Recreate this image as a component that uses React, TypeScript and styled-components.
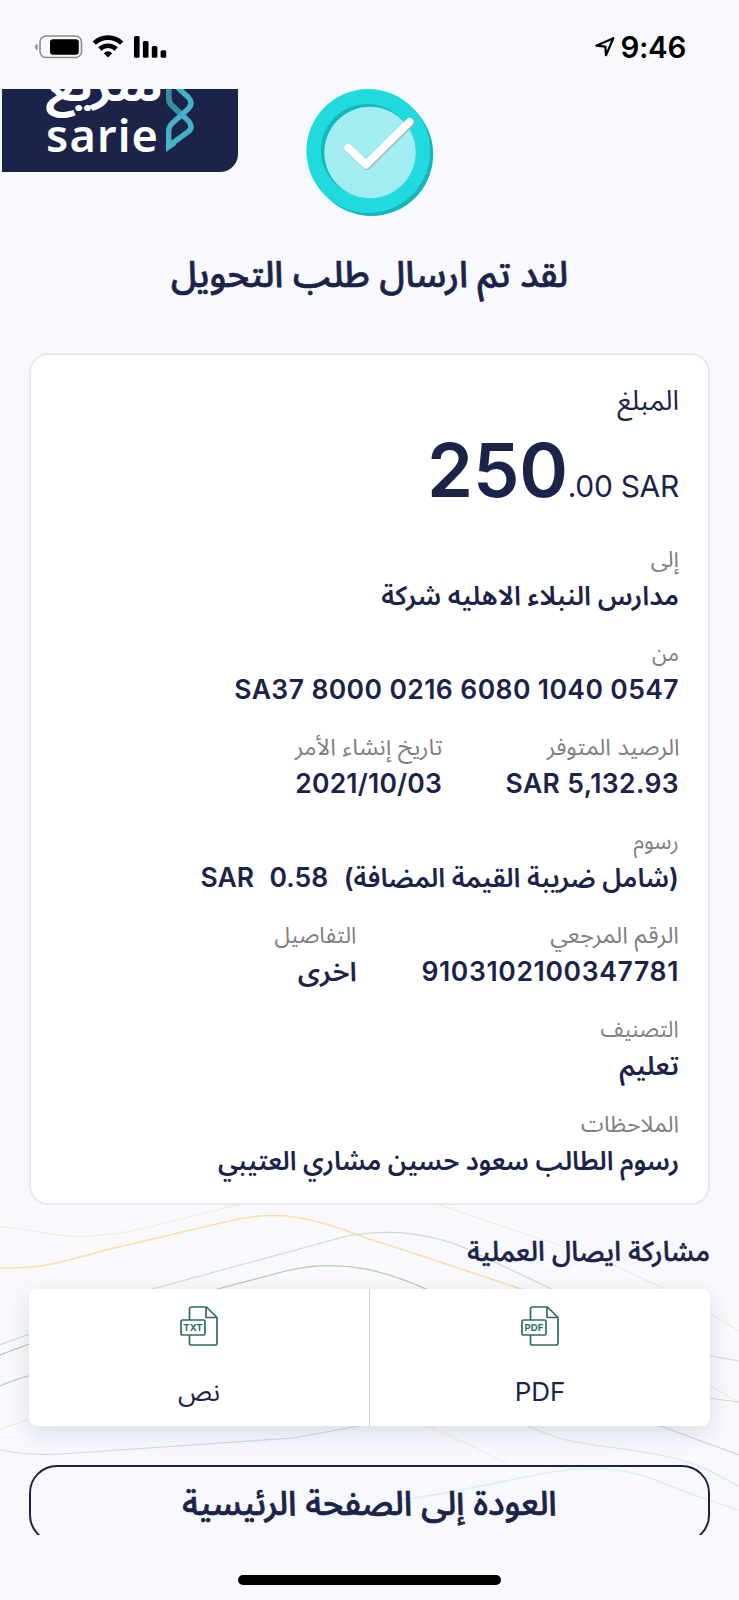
import React from 'react';
import styled, { createGlobalStyle } from 'styled-components';

const navy = '#1b2448';

const GlobalStyle = createGlobalStyle`
  * { box-sizing: border-box; }
  body {
    margin: 0;
    background: #f8f9ff;
    color: ${navy};
    font-family: Inter, "Noto Sans Arabic", "DejaVu Sans", sans-serif;
  }
`;

const Screen = styled.div`
  position: relative;
  width: 739px;
  height: 1600px;
  overflow: hidden;
  background: #f8f9ff;
  display: flex;
  flex-direction: column;
`;

const Waves = styled.svg`
  position: absolute;
  left: 0;
  top: 1200px;
  fill: none;
  stroke-width: 1.2;
`;

const StatusBar = styled.header`
  flex: none;
  display: flex;
  justify-content: space-between;
  align-items: center;
  height: 89px;
  padding: 5px 53px 0 34px;
`;

const StatusGroup = styled.div`
  display: flex;
  align-items: center;
  gap: 4px;
`;

const Clock = styled.span`
  font-size: 29.5px;
  font-weight: 600;
  line-height: 34px;
  letter-spacing: -0.3px;
  color: #000;
`;

const Viewport = styled.main`
  position: relative;
  flex: none;
  height: 1446px;
  overflow: hidden;
  display: flex;
  flex-direction: column;
  & > * { flex: none; }
`;

const Hero = styled.section`
  display: grid;
  grid-template-columns: 303.5px 128px 1fr;
  height: 134px;
  padding-left: 2px;
`;

const SarieBadge = styled.div`
  display: flex;
  gap: 4px;
  width: 236px;
  height: 83px;
  padding-left: 44px;
  overflow: hidden;
  border-bottom-right-radius: 18px;
  background: ${navy};
  color: #fff;
`;

const SarieWords = styled.div`
  display: flex;
  flex-direction: column;
  width: 114px;
`;

const SarieArabic = styled.span`
  height: 28px;
  margin-top: -18px;
  line-height: 28px;
  font-size: 43px;
  font-weight: 700;
  white-space: nowrap;
  transform: scaleX(1.18);
  transform-origin: left center;
`;

const SarieLatin = styled.span`
  margin-top: 11px;
  font: 600 45px/50px "Noto Sans", sans-serif;
  letter-spacing: 1.2px;
`;

const Title = styled.h1`
  margin: 21px 0 0;
  height: 60px;
  font-size: 36.3px;
  line-height: 60px;
  font-weight: 500;
  text-align: center;
  direction: rtl;
  -webkit-text-stroke: 0.7px ${navy};
`;

const Card = styled.section`
  direction: rtl;
  margin: 49px 29px 0;
  height: 852px;
  padding: 24.5px 29px 0;
  border: 2px solid #e8e8ee;
  border-radius: 19px;
  background: #fff;
`;

const AmountLabel = styled.div`
  height: 40px;
  line-height: 40px;
  font-size: 27.5px;
`;

const Amount = styled.div`
  direction: ltr;
  display: flex;
  justify-content: flex-end;
  align-items: baseline;
  height: 121px;
  line-height: 100px;
  font-size: 30px;
  letter-spacing: -0.3px;
`;

const Whole = styled.span`
  font-size: 74px;
  font-weight: 600;
`;

const FieldRow = styled.div<{ $gap: number }>`
  display: flex;
  gap: ${(p) => p.$gap}px;
  height: 94.2px;
`;

const Field = styled.div`
  display: flex;
  flex-direction: column;
  align-items: flex-start;
`;

const Label = styled.span<{ $stretch?: number }>`
  height: 35px;
  line-height: 36px;
  font-size: 23px;
  color: #7f7f83;
  white-space: nowrap;
  transform: scaleX(${(p) => p.$stretch ?? 1});
  transform-origin: right center;
`;

const Value = styled.span<{ $stretch?: number; $spacing?: number }>`
  display: flex;
  gap: 15.5px;
  height: 38px;
  line-height: 38px;
  font-size: 26.5px;
  font-weight: 600;
  letter-spacing: ${(p) => p.$spacing ?? 0}px;
  white-space: nowrap;
  transform: scaleX(${(p) => p.$stretch ?? 1});
  transform-origin: right center;
`;

const ShareTitle = styled.h2`
  direction: rtl;
  margin: 25px 29px 0;
  height: 44px;
  line-height: 44px;
  font-size: 27.2px;
  font-weight: 500;
  -webkit-text-stroke: 0.5px ${navy};
`;

const SharePanel = styled.section`
  display: grid;
  grid-template-columns: 340px 341px;
  margin: 15px 29px 0;
  height: 137px;
  border-radius: 8px;
  background: #fff;
  box-shadow: 0 7px 22px rgba(40, 48, 80, 0.14);
`;

const ShareOption = styled.button`
  display: flex;
  flex-direction: column;
  align-items: center;
  gap: 21px;
  padding: 16px 0 0;
  border: 0;
  background: none;
  color: inherit;
  font: inherit;
  font-size: 26px;
  line-height: 48px;
  & + & { border-left: 1px solid #cfcfd3; }
`;

const HomeButton = styled.button`
  margin: 39px 29px 0;
  height: 78px;
  padding: 0 0 2px;
  border: 2px solid ${navy};
  border-radius: 28px;
  background: none;
  color: inherit;
  font: inherit;
  font-size: 34px;
  font-weight: 500;
  line-height: 72px;
  direction: rtl;
  -webkit-text-stroke: 0.7px ${navy};
`;

const HomeIndicator = styled.div`
  flex: none;
  width: 263px;
  height: 10px;
  margin: 40px auto 0;
  border-radius: 5px;
  background: #000;
`;

const StatusIcons = () => (
  <svg width="134" height="26" viewBox="34 34 134 26">
    <path d="M37.500 43.500v7q-2.500-1-2.500-3.500t2.500-3.500z" fill="#8c8c90" />
    <rect x="40" y="36" width="41.500" height="21.500" rx="6" fill="none" stroke="#8c8c90" strokeWidth="1.600" />
    <rect x="50" y="39.300" width="28.800" height="15.400" rx="3" />
    <g fill="none" stroke="#000" strokeWidth="4.600">
      <path d="M94.300 43.200a19.500 19.500 0 0 1 27.400 0" />
      <path d="M99.800 49a11.800 11.800 0 0 1 16.400 0" />
    </g>
    <path d="M108 57.500l-4.200-4.300q4.200-3.700 8.400 0z" />
    <rect x="134" y="36" width="5.600" height="21.800" rx="1.500" />
    <rect x="142.900" y="41" width="5.600" height="16.800" rx="1.500" />
    <rect x="151.800" y="46" width="5.600" height="11.800" rx="1.500" />
    <rect x="160.600" y="50.300" width="5.600" height="7.500" rx="1.500" />
  </svg>
);

const LocationArrow = () => (
  <svg width="22" height="24" viewBox="594 35 22 24" fill="none" stroke="#000" strokeWidth="2.200" strokeLinejoin="round">
    <path d="M596.300 45.700L613.300 38.200L606 55.200L605.300 46.600z" />
  </svg>
);

const SarieKnot = () => (
  <svg width="32" height="66" viewBox="164 89 32 66" fill="none" strokeWidth="5.400">
    <path d="M176 86L188.500 97.500Q193.500 103 188.500 108.500L171.500 124Q168.700 127 168.700 131V146L188.500 131.500Q193.500 127 188.500 121L171.500 105Q168.700 102 168.700 98V86" stroke="#46b1c7" />
    <path d="M168.700 86V98Q168.700 102 171.500 105L180 113" stroke="#338f9f" />
    <path d="M166 143l8-2 2 4-10 7z" fill="#46b1c7" />
  </svg>
);

const SuccessMark = () => (
  <svg width="128" height="128" viewBox="305.500 89 128 128">
    <circle cx="371" cy="154.300" r="61.700" fill="#13b6bd" />
    <circle cx="367.800" cy="151" r="61.900" fill="#20dade" />
    <circle cx="366.800" cy="150.300" r="46.300" fill="#13b6bd" />
    <circle cx="369.500" cy="152.500" r="45.700" fill="#a2edf2" />
    <g fill="none" strokeWidth="7.600" strokeLinecap="round" strokeLinejoin="round">
      <path d="M349 149.200L366.500 166.200L410.200 123" stroke="#a5bcc0" />
      <path d="M347.700 147.700L365.500 164.800L409 121.700" stroke="#fff" />
    </g>
  </svg>
);

const FileIcon = ({ kind }: { kind: string }) => (
  <svg width="40" height="42" viewBox="0 0 40 42" fill="none" stroke="#2c6e63" strokeWidth="1.700">
    <path d="M10.500 15V4q0-2 2-2h15l10.500 10.500V38q0 2-2 2H12.500q-2 0-2-2v-8M27 2v10.500h11" strokeLinejoin="round" />
    <rect x="2" y="15" width="24" height="15" rx="1.500" />
    <text x="14" y="25.900" fontSize="9.600" fontWeight="700" textAnchor="middle" fill="#2c6e63" stroke="none" fontFamily="Inter">{kind}</text>
  </svg>
);

const Contours = () => (
  <Waves width="739" height="335" viewBox="0 1200 739 335">
    <g stroke="#f6e8d6">
      <path d="M0 1227C25 1228 50 1236 80 1236.500C125 1236 155 1225 230 1207L262 1200" />
      <path d="M425 1200L540 1239C590 1252 630 1272 664 1289S715 1316 739 1331" />
      <path d="M0 1429L40 1416" />
      <path d="M700 1380L739 1402" />
      <path d="M429 1426L507 1463" stroke="#edefe2" />
    </g>
    <path d="M0 1268C45 1269 60 1262 110 1249L225 1222C275 1209 310 1216 369 1239C420 1255 470 1272 530 1292" stroke="#f7dfa6" strokeWidth="1.500" />
    <g stroke="#cbdccb">
      <path d="M145 1291L345 1236.500C400 1226 445 1237 480 1255L560 1293" />
      <path d="M0 1345L40 1330" />
      <path d="M700 1354L739 1361" />
      <path d="M700 1397L739 1402" />
      <path d="M525 1424C570 1448 600 1443 660 1455C700 1462 720 1477 739 1486" stroke="#dce8df" />
    </g>
    <g stroke="#b2cca6">
      <path d="M0 1355L40 1340" />
      <path d="M210 1291L290 1270C345 1258 390 1272 435 1293" />
      <path d="M0 1386Q15 1379 40 1373" />
    </g>
    <path d="M0 1450C30 1456 55 1455 90 1452L293 1438L370 1424" stroke="#cbdae4" />
    <path d="M655 1424L739 1455" stroke="#cbd3e0" />
    <path d="M400 1500C470 1491 520 1476 560 1471C605 1464 640 1473 665 1484C700 1498 715 1502 739 1510" stroke="#dcefef" strokeWidth="1.600" />
  </Waves>
);

type Entry = {
  label: string;
  value: string[];
  labelStretch?: number;
  valueStretch?: number;
  spacing?: number;
};

const rows: { gap: number; entries: Entry[] }[] = [
  { gap: 0, entries: [{ label: 'إلى', value: ['مدارس النبلاء الاهليه شركة'], valueStretch: 1.006 }] },
  { gap: 0, entries: [{ label: 'من', value: ['SA37 8000 0216 6080 1040 0547'], labelStretch: 0.93, spacing: 0.4 }] },
  {
    gap: 63.5,
    entries: [
      { label: 'الرصيد المتوفر', value: ['SAR 5,132.93'], labelStretch: 1.01, spacing: 0.38 },
      { label: 'تاريخ إنشاء الأمر', value: ['2021/10/03'], labelStretch: 1.03, spacing: 0.2 },
    ],
  },
  {
    gap: 0,
    entries: [
      { label: 'رسوم', value: ['(شامل ضريبة القيمة المضافة)', '0.58', 'SAR'], labelStretch: 0.95 },
    ],
  },
  {
    gap: 65,
    entries: [
      { label: 'الرقم المرجعي', value: ['9103102100347781'], labelStretch: 1.03, spacing: 0.65 },
      { label: 'التفاصيل', value: ['اخرى'], labelStretch: 0.97, valueStretch: 1.06 },
    ],
  },
  { gap: 0, entries: [{ label: 'التصنيف', value: ['تعليم'], labelStretch: 0.935, valueStretch: 1.01 }] },
  { gap: 0, entries: [{ label: 'الملاحظات', value: ['رسوم الطالب سعود حسين مشاري العتيبي'], valueStretch: 0.981 }] },
];

export default function App() {
  return (
    <Screen>
      <GlobalStyle />
      <Contours />
      <StatusBar>
        <StatusIcons />
        <StatusGroup>
          <LocationArrow />
          <Clock>9:46</Clock>
        </StatusGroup>
      </StatusBar>
      <Viewport>
        <Hero>
          <SarieBadge>
            <SarieWords>
              <SarieArabic>سريع</SarieArabic>
              <SarieLatin>sarie</SarieLatin>
            </SarieWords>
            <SarieKnot />
          </SarieBadge>
          <SuccessMark />
        </Hero>
        <Title>لقد تم ارسال طلب التحويل</Title>
        <Card>
          <AmountLabel>المبلغ</AmountLabel>
          <Amount>
            <Whole>250</Whole>.00 SAR
          </Amount>
          {rows.map((row, i) => (
            <FieldRow key={i} $gap={row.gap}>
              {row.entries.map((entry) => (
                <Field key={entry.label}>
                  <Label $stretch={entry.labelStretch}>{entry.label}</Label>
                  <Value $stretch={entry.valueStretch} $spacing={entry.spacing}>
                    {entry.value.map((part) => <span key={part}>{part}</span>)}
                  </Value>
                </Field>
              ))}
            </FieldRow>
          ))}
        </Card>
        <ShareTitle>مشاركة ايصال العملية</ShareTitle>
        <SharePanel>
          <ShareOption><FileIcon kind="TXT" />نص</ShareOption>
          <ShareOption><FileIcon kind="PDF" />PDF</ShareOption>
        </SharePanel>
        <HomeButton>العودة إلى الصفحة الرئيسية</HomeButton>
      </Viewport>
      <HomeIndicator />
    </Screen>
  );
}
